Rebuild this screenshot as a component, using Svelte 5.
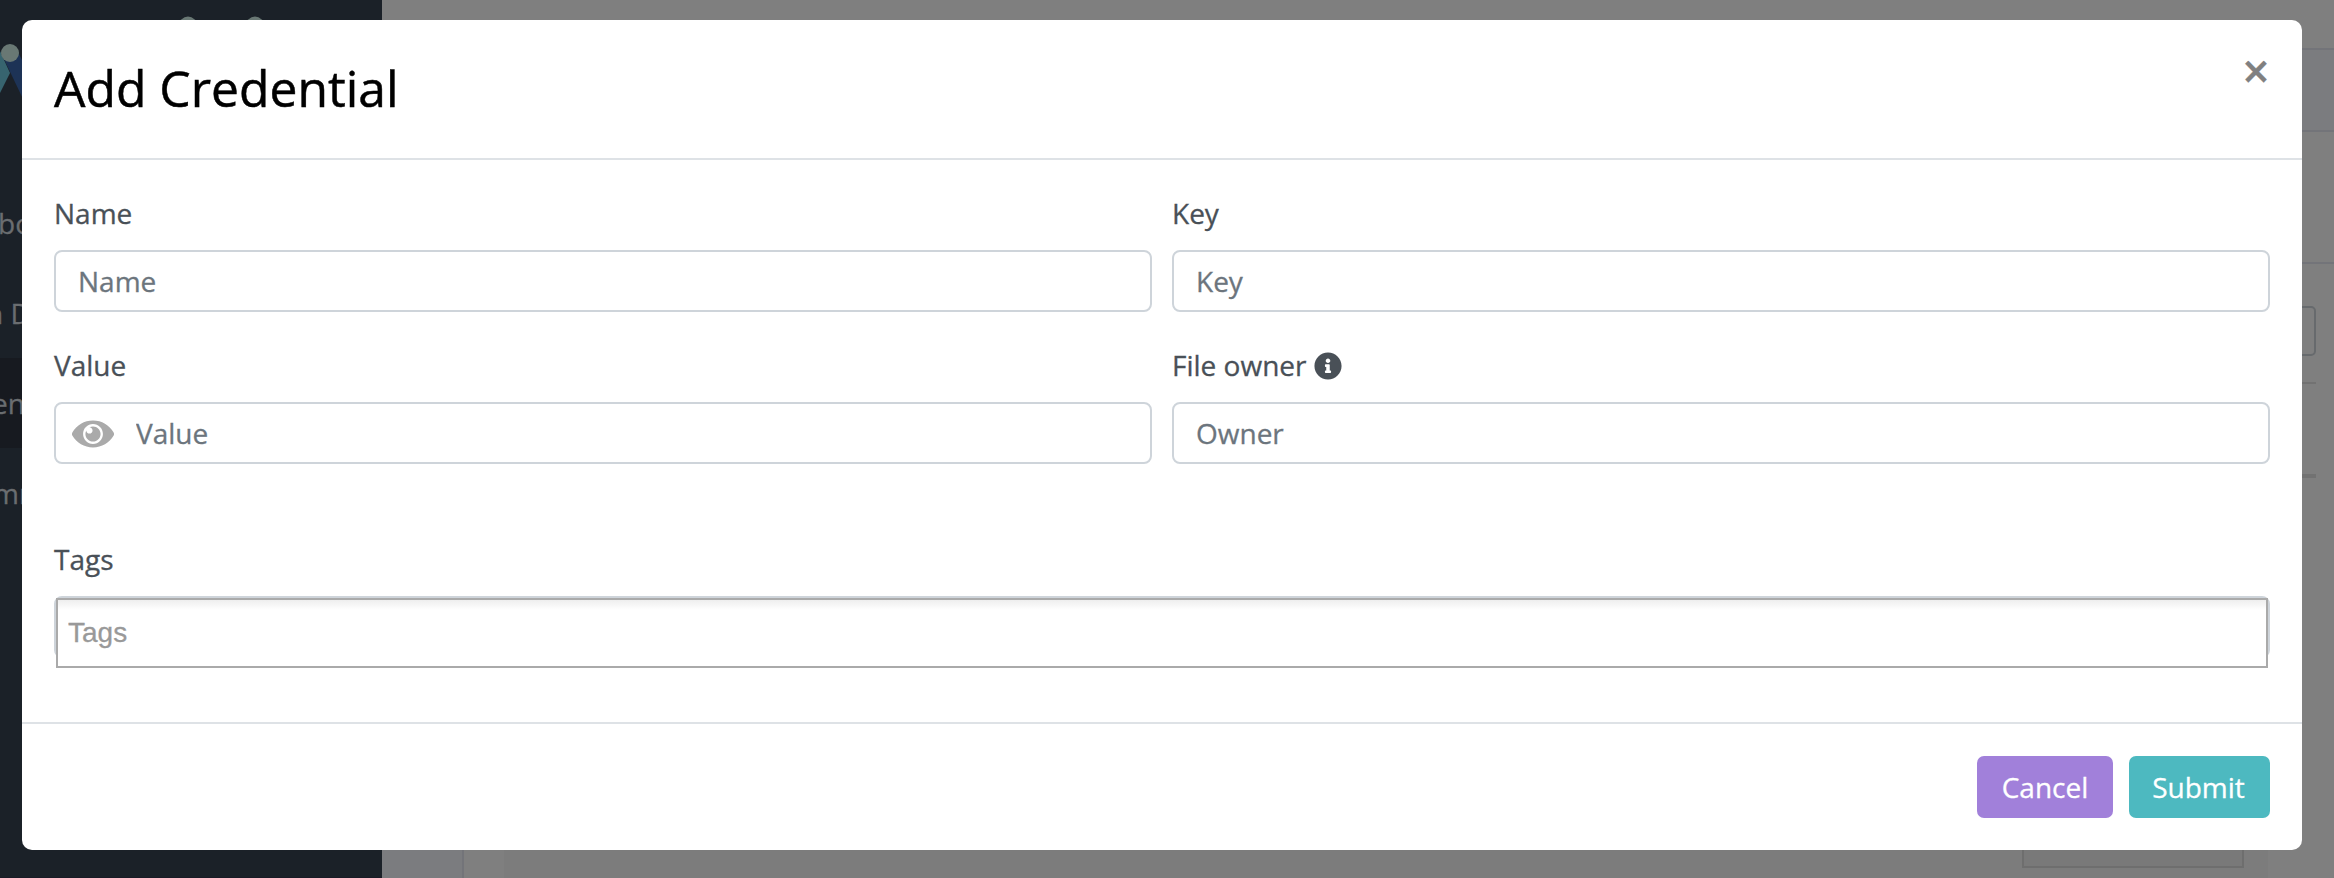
<script>
  const menu = [
    { text: 'bo', shift: -2, active: false },
    { text: 'n D', shift: -14, active: false },
    { text: 'en', shift: -8, active: true },
    { text: 'mm', shift: -7, active: false }
  ];
</script>

<div class="page">
  <aside class="sidebar">
    <svg class="logo" width="382" height="178" viewBox="0 0 382 178">
      <path d="M0 51 L10 73 L0 93Z" fill="#37646f" />
      <path d="M3 57 L17 50 L34 84 L34 122Z" fill="#1d3356" />
      <circle cx="10" cy="53" r="9" fill="#697874" />
      <circle cx="188" cy="25.500" r="9" fill="#697874" />
      <circle cx="255" cy="25.500" r="9" fill="#697874" />
    </svg>
    {#each menu as item}
      <div class="item" class:active={item.active}>
        <span style="margin-left: {item.shift}px">{item.text}</span>
      </div>
    {/each}
  </aside>
  <main class="content">
    <div class="topbar"></div>
    <div class="crumbs"></div>
    <div class="heading"></div>
    <div class="search"></div>
    <div class="rule"></div>
    <div class="rule thick"></div>
    <div class="lower">
      <div class="gutter"></div>
      <div class="table"><div class="pager"></div></div>
    </div>
  </main>
</div>

<div class="overlay">
  <form class="modal" onsubmit={(e) => e.preventDefault()}>
    <header>
      <h1>Add Credential</h1>
      <button type="button" class="close">×</button>
    </header>
    <section class="body">
      <div class="grid">
        <div class="field">
          <label for="name">Name</label>
          <input id="name" placeholder="Name" />
        </div>
        <div class="field">
          <label for="key">Key</label>
          <input id="key" placeholder="Key" />
        </div>
        <div class="field">
          <label for="value">Value</label>
          <div class="input">
            <svg width="42" height="42" viewBox="0 -32 576 576" fill="#aaa">
              <path d="M569.354 231.631C512.969 135.949 407.81 72 288 72 168.14 72 63.004 135.994 6.646 231.631a47.999 47.999 0 0 0 0 48.739C63.031 376.051 168.19 440 288 440c119.86 0 224.996-63.994 281.354-159.631a47.997 47.997 0 0 0 0-48.738zM288 392c-75.162 0-136-60.827-136-136 0-75.162 60.826-136 136-136 75.162 0 136 60.826 136 136 0 75.162-60.826 136-136 136zm104-136c0 57.438-46.562 104-104 104s-104-46.562-104-104c0-17.708 4.431-34.379 12.236-48.973l-.001.032c0 23.651 19.173 42.823 42.824 42.823s42.824-19.173 42.824-42.823c0-23.651-19.173-42.824-42.824-42.824l-.032.001C253.621 156.431 270.292 152 288 152c57.438 0 104 46.562 104 104z" />
            </svg>
            <input id="value" placeholder="Value" />
          </div>
        </div>
        <div class="field">
          <label for="owner">
            File owner
            <svg width="28" height="28" viewBox="0 0 512 512" fill="#495057">
              <path d="M256 8C119.043 8 8 119.083 8 256c0 136.997 111.043 248 248 248s248-111.003 248-248C504 119.083 392.957 8 256 8zm0 110c23.196 0 42 18.804 42 42s-18.804 42-42 42-42-18.804-42-42 18.804-42 42-42zm56 254c0 6.627-5.373 12-12 12h-88c-6.627 0-12-5.373-12-12v-24c0-6.627 5.373-12 12-12h12v-64h-12c-6.627 0-12-5.373-12-12v-24c0-6.627 5.373-12 12-12h64c6.627 0 12 5.373 12 12v100h12c6.627 0 12 5.373 12 12v24z" />
            </svg>
          </label>
          <input id="owner" placeholder="Owner" />
        </div>
      </div>
      <div class="field tags">
        <label for="tags">Tags</label>
        <div class="shell"><input id="tags" placeholder="Tags" /></div>
      </div>
    </section>
    <footer>
      <button type="button" class="cancel">Cancel</button>
      <button type="submit" class="submit">Submit</button>
    </footer>
  </form>
</div>

<style>
  :global(body) {
    margin: 0;
    overflow: hidden;
    background: #7f7f7f;
    font: 28px/42px 'Open Sans', sans-serif;
    -webkit-text-stroke: 0.3px;
  }
  * {
    box-sizing: border-box;
  }
  .page {
    display: flex;
    width: 2334px;
    height: 878px;
    overflow: hidden;
  }
  .sidebar {
    width: 382px;
    flex: none;
    background: #1b2128;
    border-bottom: 1px solid #1a1b26;
    overflow: hidden;
  }
  .logo {
    display: block;
  }
  .item {
    height: 90px;
    padding-top: 24px;
    color: #6a6d70;
    white-space: pre;
  }
  .item.active {
    background: #171a20;
  }
  .item span {
    display: inline-block;
  }
  .content {
    flex: 1;
    display: flex;
    flex-direction: column;
    background: #7f7f7f;
  }
  .topbar {
    height: 50px;
    border-bottom: 2px solid #737479;
  }
  .crumbs {
    height: 82px;
    background: #7b7c7f;
    border-bottom: 2px solid #737479;
  }
  .heading {
    height: 132px;
    border-bottom: 2px solid #737479;
  }
  .search {
    height: 50px;
    margin: 42px 18px 26px 1400px;
    border: 2px solid #676a6d;
    border-radius: 5px;
  }
  .rule {
    height: 2px;
    margin: 0 18px 90px 0;
    background: #727272;
  }
  .rule.thick {
    height: 4px;
    margin-bottom: 0;
    background: #727272;
  }
  .lower {
    flex: 1;
    display: flex;
  }
  .gutter {
    width: 82px;
    background: #7b7c7f;
    border-right: 2px solid #737479;
  }
  .table {
    flex: 1;
    display: flex;
    align-items: flex-end;
    justify-content: flex-end;
    margin: 300px 66px 0 40px;
    padding: 0 24px 10px;
    background: #7c7c7c;
  }
  .pager {
    width: 222px;
    height: 60px;
    border: 2px solid #6e6e6e;
    background: #797979;
  }
  .overlay {
    position: absolute;
    inset: 0;
    padding: 20px 32px 28px 22px;
  }
  .modal {
    height: 830px;
    display: flex;
    flex-direction: column;
    background: #fff;
    border-radius: 10px;
  }
  header {
    height: 140px;
    padding: 32px;
    display: flex;
    justify-content: space-between;
    border-bottom: 2px solid #dee2e6;
  }
  h1 {
    margin: 0;
    font-size: 49.8px;
    font-weight: 400;
    line-height: 73.5px;
    color: #000;
    -webkit-text-stroke: 0.5px;
  }
  button {
    border: 0;
    padding: 0;
    font: inherit;
  }
  .close {
    width: 28px;
    height: 42px;
    margin: -2px 0 0;
    background: none;
    color: #808080;
    font-size: 48px;
    font-weight: 600;
    line-height: 42px;
  }
  .body {
    flex: 1;
    padding: 32px;
  }
  .grid {
    display: grid;
    grid-template-columns: 1fr 1fr;
    gap: 32px 20px;
  }
  .field {
    display: flex;
    flex-direction: column;
    gap: 16px;
  }
  label {
    height: 42px;
    display: flex;
    align-items: center;
    gap: 8px;
    color: #495057;
  }
  label svg {
    margin-top: 2px;
  }
  input {
    width: 100%;
    height: 62px;
    padding: 0 22px;
    border: 2px solid #ced4da;
    border-radius: 8px;
    background: #fff;
    font: inherit;
    outline: none;
  }
  input::placeholder {
    color: #6c757d;
    opacity: 1;
  }
  .input {
    display: flex;
    align-items: center;
    height: 62px;
    padding-left: 16px;
    border: 2px solid #ced4da;
    border-radius: 8px;
  }
  .input svg {
    flex: none;
    margin-top: 2px;
  }
  .input input {
    height: 58px;
    border: 0;
    background: none;
  }
  .tags {
    margin-top: 74px;
  }
  .shell {
    height: 62px;
    border: 2px solid #ced4da;
    border-radius: 8px;
  }
  .shell input {
    display: block;
    height: 70px;
    padding: 0 10px;
    border: 2px solid #aaa;
    border-radius: 0;
    background: linear-gradient(#eee, #fff 10px);
    font-family: 'Liberation Sans', Arial, sans-serif;
  }
  .shell input::placeholder {
    color: #999;
  }
  footer {
    height: 128px;
    padding: 32px;
    display: flex;
    justify-content: flex-end;
    gap: 16px;
    border-top: 2px solid #dee2e6;
  }
  footer button {
    height: 62px;
    border-radius: 7px;
    color: #fff;
  }
  .cancel {
    width: 136px;
    background: #a180da;
  }
  .submit {
    width: 141px;
    padding-right: 2px;
    background: #4db9c0;
  }
</style>
